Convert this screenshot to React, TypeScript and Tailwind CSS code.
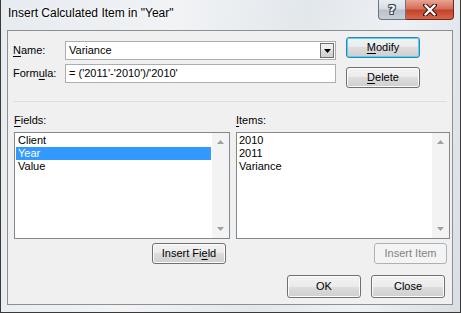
import React from "react";

const F = { fontFamily: '"Liberation Sans", Tahoma, Arial, sans-serif' };

function Btn({
  children,
  w = 74,
  h = 21,
  focused = false,
  disabled = false,
  className = "",
}: {
  children: React.ReactNode;
  w?: number;
  h?: number;
  focused?: boolean;
  disabled?: boolean;
  className?: string;
}) {
  const base =
    "flex items-center justify-center rounded-[3px] border text-[11px] leading-none ";
  const look = disabled
    ? "border-[#adb2b5] bg-[#f4f4f4] text-[#838383]"
    : focused
    ? "border-[#3c7fb1] bg-[linear-gradient(#f2f2f2_0%,#ebebeb_50%,#dddddd_50%,#cfcfcf_100%)] text-black shadow-[inset_0_0_0_1px_#48d8fb]"
    : "border-[#707070] bg-[linear-gradient(#f2f2f2_0%,#ebebeb_50%,#dddddd_50%,#cfcfcf_100%)] text-black shadow-[inset_0_0_0_1px_#fcfcfc]";
  return (
    <div
      className={base + look + " " + className}
      style={{ width: w, height: h, ...F }}
    >
      {children}
    </div>
  );
}

function ScrollBar() {
  return (
    <div className="flex w-[17px] flex-col items-center justify-between bg-[#f3f3f3] py-[7px]">
      <svg width="7" height="4" viewBox="0 0 7 4">
        <path d="M0 4 L3.5 0 L7 4 Z" fill="#a0a0a0" />
      </svg>
      <svg width="7" height="4" viewBox="0 0 7 4">
        <path d="M0 0 L3.5 4 L7 0 Z" fill="#a0a0a0" />
      </svg>
    </div>
  );
}

export default function App() {
  return (
    <div
      className="relative h-[313px] w-[461px] overflow-hidden border-b border-l border-r border-[#3a3a3a] bg-[linear-gradient(100deg,#e6ebf0_0%,#f1f3f5_35%,#e2e7ec_60%,#eef1f4_80%,#d8dee4_100%)]"
      style={F}
    >
      {/* title bar */}
      <div className="flex h-[30px] items-start">
        <div
          className="ml-[7px] mt-[6px] leading-[14px] text-black [text-shadow:0_0_6px_#ffffff,0_0_3px_#ffffff]"
          style={{ fontFamily: '"Liberation Sans", sans-serif', fontSize: 12 }}
        >
          Insert Calculated Item in "Year"
        </div>
        <div className="ml-auto mr-[6px] flex h-[20px]">
          <div className="flex h-[20px] w-[28px] items-center justify-center rounded-bl-[4px] border border-t-0 border-[#6b7480] bg-[linear-gradient(#e8edf2_0%,#d7dde4_45%,#b9c1ca_55%,#c8cfd7_100%)]">
            <span
              className="text-[13px] font-bold leading-none text-[#f4f6f8] [text-shadow:0_0_1px_#3c4450,1px_1px_0_#3c4450,-1px_-1px_0_#3c4450,1px_-1px_0_#3c4450,-1px_1px_0_#3c4450]"
              style={{ fontFamily: '"DejaVu Sans", sans-serif' }}
            >
              ?
            </span>
          </div>
          <div className="flex h-[20px] w-[48px] items-center justify-center rounded-br-[4px] border border-l-0 border-t-0 border-[#6a2a20] bg-[linear-gradient(#e8a493_0%,#d56f58_45%,#c2432a_55%,#d8664a_100%)]">
            <svg width="14" height="12" viewBox="0 0 14 12">
              <path
                d="M2 1 L12 11 M12 1 L2 11"
                stroke="#3a1a14"
                strokeWidth="4.4"
                strokeLinecap="round"
                fill="none"
              />
              <path
                d="M2.5 1.5 L11.5 10.5 M11.5 1.5 L2.5 10.5"
                stroke="#ffffff"
                strokeWidth="2.4"
                strokeLinecap="round"
                fill="none"
              />
            </svg>
          </div>
        </div>
      </div>

      {/* client area */}
      <div className="ml-[6px] h-[275px] w-[446px] border border-[#8e8f8f] bg-[#f0f0f0] text-[11px] text-black">
        {/* top */}
        <div className="flex h-[70px] items-start">
          <div className="ml-[5px] mt-[10px] flex flex-col gap-[4px]">
            <div className="flex h-[19px] items-center">
              <div className="w-[52px]">
                <span className="underline underline-offset-2">N</span>ame:
              </div>
              <div className="flex h-[19px] w-[271px] items-center border border-[#abadb3] bg-white">
                <span className="ml-[3px] flex-1">Variance</span>
                <div className="mr-[1px] flex h-[15px] w-[14px] items-center justify-center border border-[#707070] bg-[linear-gradient(#f2f2f2_0%,#ebebeb_50%,#dddddd_50%,#cfcfcf_100%)]">
                  <svg width="7" height="4" viewBox="0 0 7 4">
                    <path d="M0 0 L3.5 4 L7 0 Z" fill="#000" />
                  </svg>
                </div>
              </div>
            </div>
            <div className="flex h-[19px] items-center">
              <div className="w-[52px]">
                Form<span className="underline underline-offset-2">u</span>la:
              </div>
              <div className="flex h-[19px] w-[271px] items-center border border-[#abadb3] bg-white">
                <span className="ml-[3px]">= ('2011'-'2010')/'2010'</span>
              </div>
            </div>
          </div>
          <div className="ml-[10px] mt-[6px] flex flex-col gap-[9px]">
            <Btn focused>
              <span className="underline underline-offset-2">M</span>odify
            </Btn>
            <Btn>
              <span className="underline underline-offset-2">D</span>elete
            </Btn>
          </div>
        </div>
        <div className="mx-[5px] border-t border-[#d5dfe5]" />

        {/* lists */}
        <div className="mt-[12px] flex gap-[6px] pl-[6px]">
          <div className="flex flex-col">
            <div className="h-[18px] leading-[12px]">
              <span className="underline underline-offset-2">F</span>ields:
            </div>
            <div className="flex h-[107px] w-[216px] border border-[#828790] bg-white">
              <div className="flex-1 p-[1px]">
                <div className="h-[13px] pl-[2px] leading-[13px]">Client</div>
                <div className="h-[13px] bg-[#3399ff] pl-[2px] leading-[13px] text-white">
                  Year
                </div>
                <div className="h-[13px] pl-[2px] leading-[13px]">Value</div>
              </div>
              <ScrollBar />
            </div>
            <div className="mt-[4px] flex justify-end pr-[4px]">
              <Btn>
                Insert Fi<span className="underline underline-offset-2">e</span>ld
              </Btn>
            </div>
          </div>
          <div className="flex flex-col">
            <div className="h-[18px] leading-[12px]">
              <span className="underline underline-offset-2">I</span>tems:
            </div>
            <div className="flex h-[107px] w-[214px] border border-[#828790] bg-white">
              <div className="flex-1 p-[1px]">
                <div className="h-[13px] pl-[1px] leading-[13px]">2010</div>
                <div className="h-[13px] pl-[1px] leading-[13px]">2011</div>
                <div className="h-[13px] pl-[1px] leading-[13px]">Variance</div>
              </div>
              <ScrollBar />
            </div>
            <div className="mt-[4px] flex justify-end pr-[3px]">
              <Btn disabled w={73}>
                Insert Item
              </Btn>
            </div>
          </div>
        </div>

        {/* bottom buttons */}
        <div className="mt-[11px] flex justify-end gap-[10px] pr-[7px]">
          <Btn h={23}>OK</Btn>
          <Btn h={23}>Close</Btn>
        </div>
      </div>
    </div>
  );
}
